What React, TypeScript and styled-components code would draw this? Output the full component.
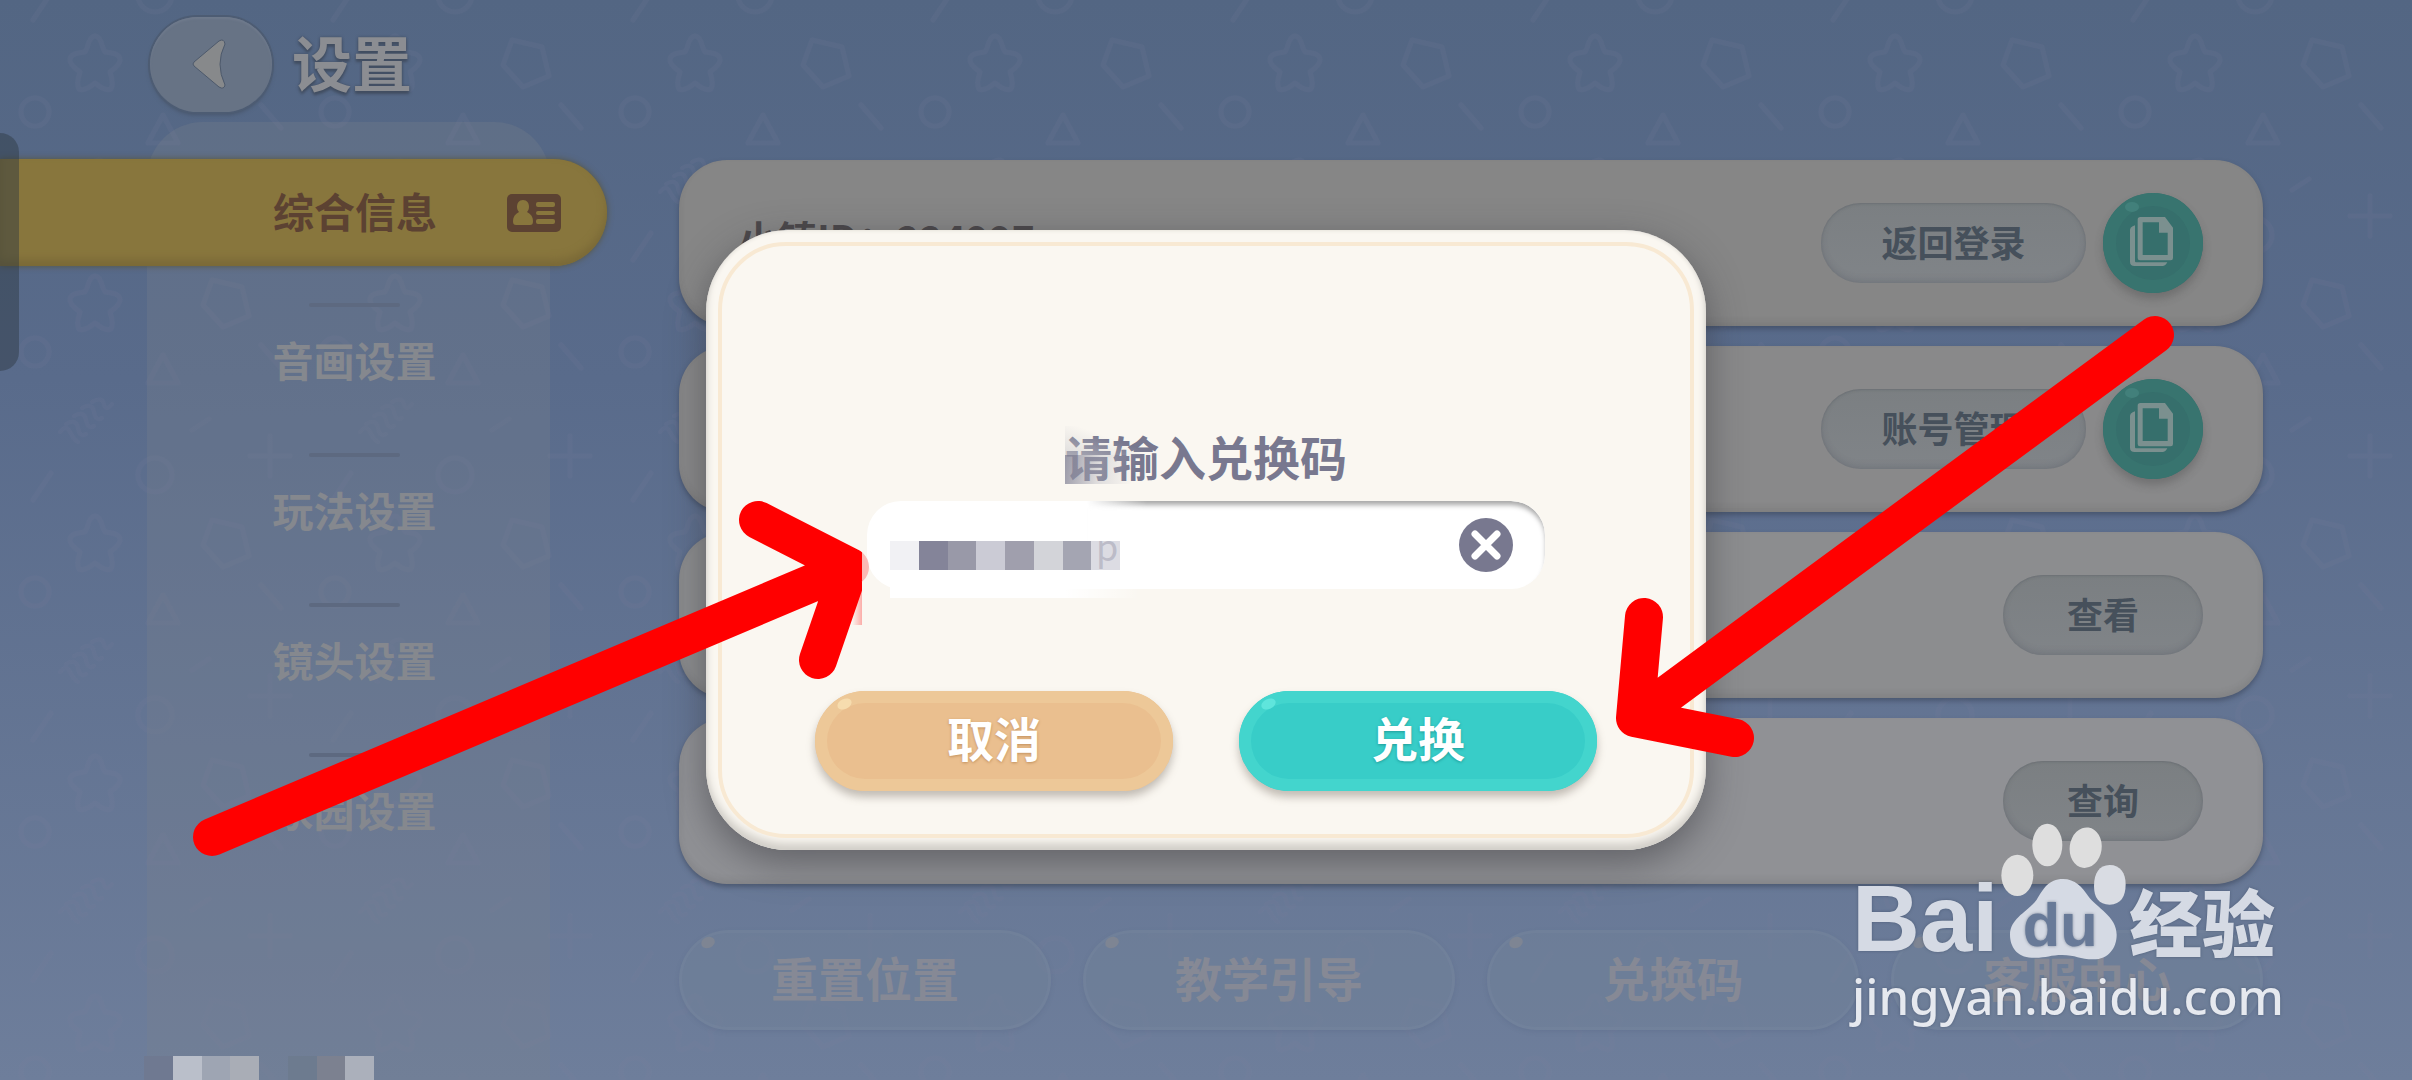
import React from 'react';
import styled, { createGlobalStyle } from 'styled-components';

const GlobalStyle = createGlobalStyle`
  *, *::before, *::after { box-sizing: border-box; }
  body {
    margin: 0;
    font-family: "Noto Sans CJK SC", "Noto Sans", sans-serif;
    font-weight: 700;
  }
  button, input { font: inherit; }
  button { border: 0; padding: 0; cursor: pointer; }
`;

const Page = styled.div`
  position: relative;
  min-height: 100vh;
  overflow: hidden;
  display: flex;
  flex-direction: column;
  background: linear-gradient(#536683, #596b8b 35%, #6e7e9b);
`;

const Layer = styled.svg`
  position: absolute;
  inset: 0;
  width: 100%;
  height: 100%;
  pointer-events: none;
`;

const Header = styled.header`
  position: relative;
  display: flex;
  align-items: center;
  gap: 20px;
  height: 122px;
  padding: 6px 0 0 150px;
`;

const BackButton = styled.button`
  display: grid;
  place-items: center;
  width: 122px;
  height: 95px;
  padding-right: 4px;
  border-radius: 48px;
  background: #677385;
  box-shadow: 0 0 0 2px #4d5c73, inset 0 2px 2px #6f7a8c, 0 3px 4px #48566b;
`;

const Title = styled.h1`
  margin: 0;
  padding-bottom: 6px;
  font-size: 60px;
  line-height: 80px;
  color: #8b8d92;
  text-shadow: 0 3px 3px #414d60, 0 0 3px #414d60;
`;

const Body = styled.div`
  position: relative;
  flex: 1;
  display: grid;
  grid-template-columns: 550px 1fr;
`;

const Sidebar = styled.nav`
  margin-left: 147px;
  padding-top: 37px;
  border-radius: 56px 56px 0 0;
  background: rgba(122, 128, 140, 0.28);
`;

const ActiveTab = styled.button`
  position: relative;
  display: flex;
  align-items: center;
  gap: 70px;
  width: 607px;
  height: 107px;
  margin: 0 0 37px -147px;
  padding-left: 273px;
  border-radius: 0 54px 54px 0;
  background: #88763d;
  box-shadow: 0 0 6px #57553f, inset 0 -6px 8px #7a6937;
  color: #5c4232;
  font-size: 41px;
  line-height: 60px;
`;

const TabLabel = styled.span`
  padding-bottom: 6px;
`;

const TabItem = styled.button`
  display: flex;
  flex-direction: column;
  align-items: center;
  gap: 22px;
  width: 100%;
  height: 150px;
  padding-left: 12px;
  background: none;
  color: #85888e;
  font-size: 41px;
  line-height: 60px;

  &::before {
    content: "";
    width: 91px;
    height: 4px;
    border-radius: 2px;
    background: #5d6980;
  }
`;

const Content = styled.main`
  display: flex;
  flex-direction: column;
  gap: 20px;
  padding: 38px 149px 50px 129px;
`;

const Card = styled.section<{ $tone: string }>`
  display: flex;
  align-items: center;
  justify-content: flex-end;
  gap: 17px;
  height: 166px;
  padding: 0 60px;
  border-radius: 48px;
  background: ${p => p.$tone};
  box-shadow: 0 3px 5px rgba(50, 60, 80, 0.5), inset 0 -4px 6px rgba(60, 60, 60, 0.12);
`;

const CardTitle = styled.h2`
  margin: 0 auto 0 0;
  padding-bottom: 12px;
  font-size: 39px;
  line-height: 60px;
  color: #4b484b;
`;

const PillButton = styled.button<{ $wide?: boolean }>`
  width: ${p => (p.$wide ? 265 : 200)}px;
  height: 80px;
  padding-bottom: 4px;
  border-radius: 40px;
  background: linear-gradient(#7b7f82, #808488);
  box-shadow: inset 0 -3px 6px rgba(70, 75, 85, 0.22), inset 0 1px 2px rgba(70, 75, 85, 0.25);
  color: #46505b;
  font-size: 36px;
  line-height: 54px;
`;

const CopyButton = styled.button`
  position: relative;
  display: grid;
  place-items: center;
  width: 100px;
  height: 100px;
  padding: 0 4px 4px 0;
  border-radius: 50%;
  background: #366f6c;
  box-shadow: inset 0 0 0 13px #38746f, 0 6px 8px rgba(60, 60, 60, 0.3);

  &::after {
    content: "";
    position: absolute;
    left: 22px;
    top: 9px;
    width: 14px;
    height: 10px;
    border-radius: 50%;
    background: #42807b;
  }
`;

const Shortcuts = styled.div`
  display: grid;
  grid-template-columns: repeat(4, 1fr);
  gap: 32px;
  margin-top: 26px;
`;

const Shortcut = styled.button`
  position: relative;
  height: 100px;
  padding-bottom: 6px;
  border: 3px solid rgba(125, 139, 163, 0.2);
  border-radius: 50px;
  background: rgba(116, 132, 152, 0.3);
  box-shadow: 0 2px 4px rgba(85, 100, 130, 0.25);
  color: #868995;
  font-size: 47px;
  line-height: 70px;

  &::after {
    content: "";
    position: absolute;
    left: 19px;
    top: 4px;
    width: 14px;
    height: 11px;
    border-radius: 50%;
    background: #7e8593;
    rotate: -25deg;
  }
`;

const Overlay = styled.div`
  position: absolute;
  inset: 0;
  display: grid;
  place-items: center;
`;

const Dialog = styled.div`
  position: relative;
  display: flex;
  flex-direction: column;
  align-items: center;
  width: 1000px;
  padding: 191px 0 59px;
  border-radius: 82px;
  background: #faf7f1;
  box-shadow: 0 12px 36px rgba(50, 50, 55, 0.5), inset 0 -7px 9px #d2cfc9, inset 0 0 4px #dedbd5;

  &::before {
    content: "";
    position: absolute;
    inset: 12px;
    border: 4px solid #f8e9d3;
    border-radius: 68px;
    pointer-events: none;
  }
`;

const FieldLabel = styled.label`
  position: relative;
  font-size: 47px;
  line-height: 70px;
  color: #78788f;
  margin-bottom: 10px;
`;

const LabelSmudge = styled.span`
  position: absolute;
  left: 0;
  top: 5px;
  width: 75px;
  height: 58px;
  background:
    linear-gradient(100deg, rgba(136, 136, 154, 0.85), rgba(180, 180, 190, 0.4) 45%, transparent 90%) 0 100% / 100% 50% no-repeat,
    linear-gradient(20deg, rgba(205, 205, 208, 0.6), transparent 60%) 0 0 / 100% 50% no-repeat;
`;

const Field = styled.div`
  position: relative;
  display: flex;
  align-items: center;
  justify-content: flex-end;
  width: 678px;
  height: 88px;
  padding-right: 32px;
  border-radius: 34px;
  background: #ffffff;
  margin-bottom: 102px;

  &::before {
    content: "";
    position: absolute;
    inset: 0 0 0 220px;
    border-radius: 0 34px 34px 0;
    box-shadow: inset 0 5px 5px -1px #a9a9a9;
    mask-image: linear-gradient(90deg, transparent, #000 60px);
    pointer-events: none;
  }
`;

const CodeInput = styled.input`
  flex: 1;
  min-width: 0;
  height: 88px;
  padding: 0 20px 0 229px;
  border: 0;
  outline: 0;
  background: transparent;
  color: #aeaebc;
  font-size: 36px;
  font-weight: 400;
`;

const ClearButton = styled.button`
  display: grid;
  place-items: center;
  width: 54px;
  height: 54px;
  border-radius: 50%;
  background: #78788f;
`;

const Mosaic = styled.div`
  position: absolute;
  left: 23px;
  top: 40px;
  display: grid;
  grid-template-columns: repeat(8, 1fr);
  width: 230px;
  height: 29px;
`;

const MosaicPatch = styled.div`
  position: absolute;
  left: 23px;
  top: 69px;
  width: 250px;
  height: 28px;
  background: linear-gradient(90deg, #ffffff 70%, transparent);
`;

const Tile = styled.span<{ $color: string }>`
  background: ${p => p.$color};
`;

const Actions = styled.div`
  display: flex;
  gap: 66px;
`;

const ActionButton = styled.button<{ $fill: string; $ring: string; $glow: string; $shade: string }>`
  position: relative;
  width: 358px;
  height: 100px;
  padding-bottom: 8px;
  border-radius: 50px;
  background: ${p => p.$fill};
  box-shadow: inset 0 0 0 12px ${p => p.$ring}, 0 6px 9px rgba(110, 100, 90, 0.4);
  color: #ffffff;
  font-size: 47px;
  line-height: 70px;
  text-shadow: 0 1px 3px ${p => p.$shade};

  &::after {
    content: "";
    position: absolute;
    left: 22px;
    top: 8px;
    width: 15px;
    height: 10px;
    border-radius: 50%;
    background: ${p => p.$glow};
    rotate: -25deg;
  }
`;

const EdgeHandle = styled.div`
  position: absolute;
  left: 0;
  top: 133px;
  width: 19px;
  height: 238px;
  border-radius: 0 19px 19px 0;
  background: rgba(45, 55, 65, 0.45);
`;

const BottomMosaic = styled.div`
  position: absolute;
  left: 144px;
  bottom: 0;
  display: grid;
  grid-template-columns: repeat(8, 1fr);
  width: 230px;
  height: 24px;
`;

const Watermark = styled.div`
  position: absolute;
  right: 126px;
  bottom: 49px;
  width: 434px;
  color: #d5dae4;
  text-shadow: 0 0 3px rgba(60, 75, 100, 0.6);
`;

const Brand = styled.div`
  display: flex;
  align-items: flex-end;
  gap: 3px;
`;

const BrandLatin = styled.span`
  font-family: "Liberation Sans", Arial, sans-serif;
  font-size: 94px;
  line-height: 84px;
`;

const BrandHan = styled.span`
  font-size: 73px;
  line-height: 84px;
  font-weight: 900;
`;

const SiteUrl = styled.div`
  font-family: "Noto Sans", "Open Sans", sans-serif;
  font-size: 49px;
  line-height: 70px;
  font-weight: 500;
  color: #e6e9ef;
`;

const codeTiles = ['#f1f1f4', '#848499', '#9999a8', '#cbcbd5', '#a09fad', '#d3d4d9', '#a4a5b2', 'rgba(196,196,208,0.6)'];
const cornerTiles = ['#6f7991', '#babfca', '#9ea5b3', '#a9adb6', 'transparent', '#6d7b8f', '#7c8190', '#abb0bb'];

const Backdrop = () => (
  <Layer aria-hidden="true">
    <defs>
      <pattern id="doodles" width="300" height="240" patternUnits="userSpaceOnUse">
        <g fill="none" stroke="#7d7d96" strokeOpacity="0.13" strokeWidth="5" strokeLinecap="round" strokeLinejoin="round">
          <path d="M95 36q5 0 8 12l2 4q14 1 15 7q1 5-10 13q4 12 1 17q-5 3-16-6q-11 9-16 6q-3-5 1-17q-11-8-10-13q1-6 15-7l2-4q3-12 8-12z" />
          <path d="M212 40l30 7 7 29-26 11-20-22z" />
          <circle cx="35" cy="112" r="14" />
          <circle cx="155" cy="-5" r="17" />
          <circle cx="155" cy="235" r="17" />
          <path d="M163 115l15 28h-30z" />
          <path d="M261 105l20 23M51-7L33 20M51 233L33 260M209 179l-17 11M270 196v40M250 216h40" />
          <path d="M60 192q6-8 10 0t8 10M66 184q10-6 12 4t8 6M74 176q10-6 12 4t8 6M82 168q10-6 12 4t8 6M92 162q10-6 12 2t8 0" strokeWidth="4" />
        </g>
      </pattern>
    </defs>
    <rect width="100%" height="100%" fill="url(#doodles)" />
  </Layer>
);

const ProfileIcon = () => (
  <svg width="54" height="38" viewBox="0 0 54 38" aria-hidden="true">
    <rect width="54" height="38" rx="5" fill="#5c4232" />
    <g fill="#88763d">
      <path d="M16 6c4 0 6 3 6 7 0 2-1 4-2 5 4 2 6 5 6 9 0 3-1 4-3 4H9c-2 0-3-1-3-4 0-4 2-7 6-9-1-1-2-3-2-5 0-4 2-7 6-7z" />
      <rect x="29" y="8" width="19" height="5" rx="2" />
      <rect x="29" y="17" width="19" height="4" rx="2" />
      <rect x="29" y="25" width="19" height="5" rx="2" />
    </g>
  </svg>
);

const CopyIcon = () => (
  <svg width="43" height="49" viewBox="0 0 129 147" fill="#7b908f" aria-hidden="true">
    <path fillRule="evenodd" d="M31 0h74l24 32v91q0 7-7 7H30q-7 0-7-7V8q0-8 8-8zM38 16v98h75V47H87V16z" />
    <path d="M0 38q0-6 8-10l7-3v108q0 3 3 3h94q-5 11-15 11H14q-14 0-14-13z" />
  </svg>
);

const Arrows = () => (
  <Layer viewBox="0 0 2412 1080" preserveAspectRatio="none" aria-hidden="true">
    <defs>
      <clipPath id="inside"><rect x="0" y="0" width="862" height="1080" /></clipPath>
      <clipPath id="tip"><rect x="862" y="540" width="12" height="58" /></clipPath>
      <linearGradient id="smear"><stop offset="0" stopColor="#f00" stopOpacity="0" /><stop offset="1" stopColor="#f00" stopOpacity="0.3" /></linearGradient>
    </defs>
    <g fill="none" stroke="#ff0000" strokeWidth="38" strokeLinecap="round" strokeLinejoin="round">
      <g clipPath="url(#inside)"><path d="M212 837L850 567M758 520l92 47-32 93" /></g>
      <path d="M212 837L850 567" clipPath="url(#tip)" strokeOpacity="0.25" />
      <path d="M2155 335L1635 718M1644 617l-9 101 100 20" />
    </g>
    <rect x="852" y="585" width="10" height="40" fill="url(#smear)" />
  </Layer>
);

const Paw = () => (
  <svg width="125" height="138" viewBox="478 70 375 414" aria-label="du" role="img">
    <g fill="#dedede">
      <ellipse cx="527" cy="227" rx="48" ry="62" />
      <ellipse cx="617" cy="136" rx="45" ry="64" />
      <ellipse cx="732" cy="144" rx="48" ry="61" transform="rotate(8 732 144)" />
      <path d="M804 196c32 0 48 24 48 58 0 36-14 61-48 61-33 0-47-22-47-56 0-38 16-63 47-63z" fill="#d9dce3" />
    </g>
    <path fill="#d5dae4" d="M664 238c36 0 58 24 76 52 25 35 85 60 85 115 0 40-25 74-70 74-40 0-55-13-93-13-37 0-52 10-92 8-45-2-65-34-65-69 0-50 55-70 80-105 20-32 35-62 79-62z" />
    <text x="656" y="438" textAnchor="middle" fontFamily="Liberation Sans, Arial, sans-serif" fontSize="184" fontWeight="700" fill="#687a98">du</text>
  </svg>
);

const cards = [
  { title: '小镇ID：224997', action: '返回登录', copy: true, tone: '#868686' },
  { title: '', action: '账号管理', copy: true, tone: '#89898a' },
  { title: '', action: '查看', copy: false, tone: '#8c8d8f' },
  { title: '', action: '查询', copy: false, tone: '#909195' },
];

export default function App() {
  return (
    <Page>
      <GlobalStyle />
      <Backdrop />
      <Header>
        <BackButton aria-label="返回">
          <svg width="36" height="52" viewBox="0 0 36 52" aria-hidden="true">
            <path d="M28 3q5-3 6 3-10 20 0 41-1 5-6 2L3 28q-2-2 0-4z" fill="#87898b" stroke="#4d596b" strokeWidth="1" />
          </svg>
        </BackButton>
        <Title>设置</Title>
      </Header>
      <Body>
        <Sidebar>
          <ActiveTab>
            <TabLabel>综合信息</TabLabel>
            <ProfileIcon />
          </ActiveTab>
          {['音画设置', '玩法设置', '镜头设置', '家园设置'].map(name => (
            <TabItem key={name}>{name}</TabItem>
          ))}
        </Sidebar>
        <Content>
          {cards.map(card => (
            <Card key={card.action} $tone={card.tone}>
              {card.title && <CardTitle>{card.title}</CardTitle>}
              <PillButton $wide={card.copy}>{card.action}</PillButton>
              {card.copy && <CopyButton aria-label="复制"><CopyIcon /></CopyButton>}
            </Card>
          ))}
          <Shortcuts>
            {['重置位置', '教学引导', '兑换码', '客服中心'].map(name => (
              <Shortcut key={name}>{name}</Shortcut>
            ))}
          </Shortcuts>
        </Content>
      </Body>
      <EdgeHandle />
      <BottomMosaic>
        {cornerTiles.map((c, i) => <Tile key={i} $color={c} />)}
      </BottomMosaic>
      <Overlay>
        <Dialog role="dialog">
          <FieldLabel htmlFor="code">
            请输入兑换码
            <LabelSmudge />
          </FieldLabel>
          <Field>
            <CodeInput id="code" defaultValue="p" />
            <ClearButton aria-label="清除">
              <svg width="30" height="30" viewBox="0 0 30 30" aria-hidden="true">
                <path d="M4 4l22 22M26 4L4 26" stroke="#ffffff" strokeWidth="7" strokeLinecap="round" />
              </svg>
            </ClearButton>
            <MosaicPatch />
            <Mosaic>
              {codeTiles.map((c, i) => <Tile key={i} $color={c} />)}
            </Mosaic>
          </Field>
          <Actions>
            <ActionButton $fill="#eabf8f" $ring="#edc898" $glow="#f6dcae" $shade="#c08f5c">取消</ActionButton>
            <ActionButton $fill="#38cdc8" $ring="#43d5cd" $glow="#5fe5dc" $shade="#1f9c98">兑换</ActionButton>
          </Actions>
        </Dialog>
      </Overlay>
      <Arrows />
      <Watermark>
        <Brand>
          <BrandLatin>Bai</BrandLatin>
          <Paw />
          <BrandHan>经验</BrandHan>
        </Brand>
        <SiteUrl>jingyan.baidu.com</SiteUrl>
      </Watermark>
    </Page>
  );
}
